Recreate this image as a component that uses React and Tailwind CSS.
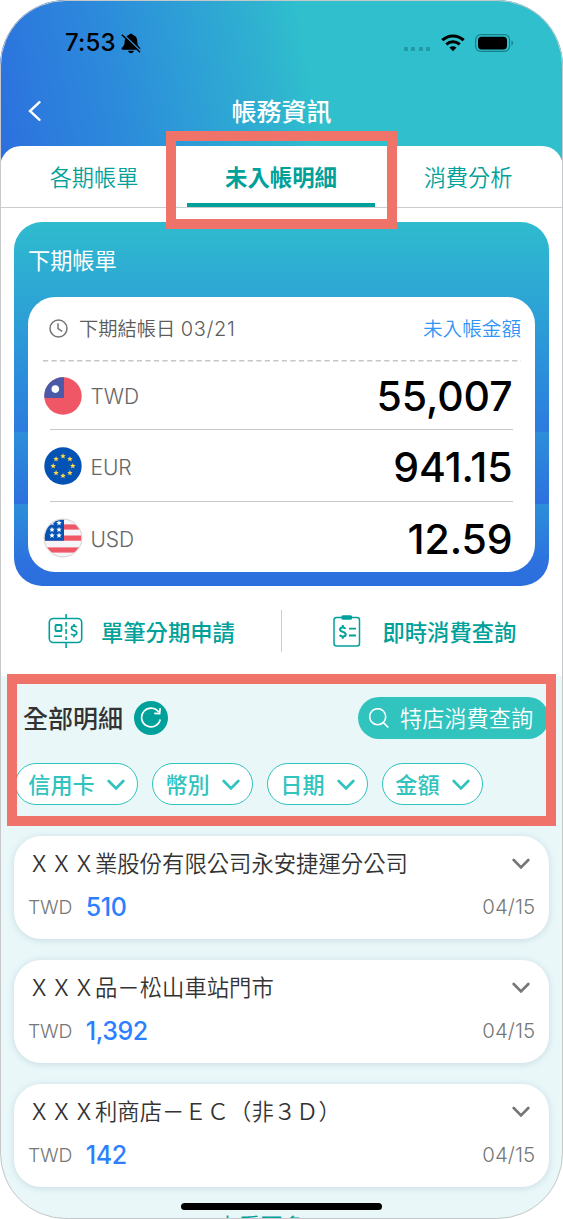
import React, { useState } from "react";

const TABS = ["各期帳單", "未入帳明細", "消費分析"];
const FILTERS = ["信用卡", "幣別", "日期", "金額"];

const RECORDS = [
  { name: "ＸＸＸ業股份有限公司永安捷運分公司", currency: "TWD", amount: "510", date: "04/15" },
  { name: "ＸＸＸ品－松山車站門市", currency: "TWD", amount: "1,392", date: "04/15" },
  { name: "ＸＸＸ利商店－ＥＣ（非３Ｄ）", currency: "TWD", amount: "142", date: "04/15" },
];

const STAR = "M0 -2.9 L.75 -.95 L2.8 -.9 L1.2 .4 L1.75 2.4 L0 1.25 L-1.75 2.4 L-1.2 .4 L-2.8 -.9 L-.75 -.95Z";

function FlagTW() {
  return (
    <svg className="size-[38px]" viewBox="0 0 38 38">
      <clipPath id="tw"><circle cx="19" cy="19" r="18.7" /></clipPath>
      <g clipPath="url(#tw)">
        <rect width="38" height="38" fill="#ef5766" />
        <rect width="20" height="21" fill="#4a5aa8" />
      </g>
      <circle cx="11.3" cy="12.1" r="3.8" fill="#fff" />
    </svg>
  );
}

function FlagEU() {
  const stars = [0, 45, 90, 135, 180, 225, 270, 315];
  return (
    <svg className="size-[38px]" viewBox="0 0 38 38">
      <circle cx="19" cy="19" r="18.7" fill="#0552b5" />
      {stars.map((deg) => (
        <path
          key={deg}
          d={STAR}
          fill="#ffda44"
          transform={`translate(${19 + 9.8 * Math.sin((deg * Math.PI) / 180)} ${19 - 9.8 * Math.cos((deg * Math.PI) / 180)})`}
        />
      ))}
    </svg>
  );
}

function FlagUS() {
  return (
    <svg className="-mx-px size-[40px]" viewBox="-1 -1 40 40">
      <clipPath id="us"><circle cx="19" cy="19" r="18.4" /></clipPath>
      <g clipPath="url(#us)">
        <rect width="38" height="38" fill="#f5f5f9" />
        <rect y="5.4" width="38" height="5.2" fill="#ef5766" />
        <rect y="16.5" width="38" height="5.2" fill="#ef5766" />
        <rect y="28.4" width="38" height="5.2" fill="#ef5766" />
        <rect width="20" height="21.7" fill="#0552b5" />
        <path d={STAR} fill="#fff" transform="translate(8 4)" />
        <path d={STAR} fill="#fff" transform="translate(15 4)" />
        <path d={STAR} fill="#fff" transform="translate(8 10.7)" />
        <path d={STAR} fill="#fff" transform="translate(15 10.7)" />
        <path d={STAR} fill="#fff" transform="translate(8 16.5)" />
        <path d={STAR} fill="#fff" transform="translate(15 16.5)" />
      </g>
      <circle cx="19" cy="19" r="18.9" fill="none" stroke="#cfcfcf" />
    </svg>
  );
}

function Chevron({ className }) {
  return (
    <svg className={className} viewBox="0 0 18 12" fill="none" stroke="currentColor" strokeWidth="2.7" strokeLinecap="round" strokeLinejoin="miter">
      <path d="M1.7 2 L9 9.4 L16.3 2" />
    </svg>
  );
}

function StatusBar() {
  return (
    <div className="flex h-[86px] items-center pl-[65px] pr-[49px]">
      <span className="text-[24px] leading-none font-medium tracking-[0.2px]">7:53</span>
      <svg className="ml-[5px] h-[21px] w-5" viewBox="0 0 20 21">
        <path d="M10 .8 C8.8 .8 8.4 1.3 8.2 1.8 C4.7 2.8 3.7 6 3.6 9 C3.5 12.5 2.2 13.2 .9 14.8 C.3 15.6 .6 16.8 1.8 16.8 H18.2 C19.4 16.8 19.7 15.6 19.1 14.8 C17.8 13.2 16.5 12.5 16.4 9 C16.3 6 15.3 2.8 11.8 1.8 C11.6 1.3 11.2 .8 10 .8Z M7 17.8 H13 C12.6 19.4 11.4 20.2 10 20.2 C8.6 20.2 7.4 19.4 7 17.8Z" />
        <path d="M2.2 1.2 L19.6 18" stroke="#2d8fda" strokeWidth="1.5" />
        <path d="M.9 1.8 L19 19.2" stroke="#000" strokeWidth="1.5" />
      </svg>
      <div className="mt-3 ml-auto flex gap-[3.4px]">
        <i className="size-1 rounded-[1px] bg-[#229aa5]" />
        <i className="size-1 rounded-[1px] bg-[#229aa5]" />
        <i className="size-1 rounded-[1px] bg-[#229aa5]" />
        <i className="size-1 rounded-[1px] bg-[#229aa5]" />
      </div>
      <svg className="ml-[11px] h-[18px] w-6" viewBox="0 0 24 18" fill="none" stroke="#000" strokeWidth="3">
        <path d="M1.3 6.2 C7.4 .5 16.6 .5 22.7 6.2" />
        <path d="M5.3 10.3 C9.2 6.8 14.8 6.8 18.7 10.3" />
        <path d="M8.5 13.6 C10.6 11.7 13.4 11.7 15.5 13.6 L12 17.2Z" fill="#000" stroke="none" />
      </svg>
      <svg className="ml-[10px] h-[18px] w-[39px]" viewBox="0 0 39 18">
        <rect x=".6" y=".6" width="34" height="16.8" rx="5.2" fill="none" stroke="#187f88" strokeWidth="1.2" />
        <rect x="3" y="2.8" width="29" height="12.6" rx="3.6" />
        <path d="M36.5 6.5 C38.5 7.2 38.5 10.8 36.5 11.5Z" fill="#187f88" />
      </svg>
    </div>
  );
}

function BalanceRow({ flag, code, amount }) {
  return (
    <div className="flex h-full items-center pl-[0.5px]">
      {flag}
      <div className="ml-[6px] flex h-full flex-1 items-center justify-between">
        <span className="ml-[3px] pt-[3px] text-[21px] font-light tracking-[-0.1px] text-[#666]">{code}</span>
        <span className="pt-[2px] text-[41px] leading-none font-medium tracking-[-0.1px] text-black">{amount}</span>
      </div>
    </div>
  );
}

function BillCard() {
  return (
    <section className="mx-[14px] mt-[14px]">
      <div className="flex h-[210px] flex-col rounded-t-[28px] bg-linear-to-b from-[#2fbbce] via-[#2da3d5] via-40% to-[#2d7bde] px-[14px]">
        <h2 className="h-[75px] pt-[23px] text-[22.2px] leading-8 text-white">下期帳單</h2>
        <div className="flex flex-1 flex-col rounded-t-[27px] bg-white">
          <div className="mx-[15px] flex h-[63px] items-center">
            <svg className="ml-[6px] size-[19px]" viewBox="0 0 19 19" fill="none" stroke="#757575" strokeWidth="1.5">
              <circle cx="9.5" cy="9.5" r="8.5" />
              <path d="M9 4.2 V9.5 L13.2 12.3" />
            </svg>
            <span className="ml-[11px] pt-px text-[19.3px] font-[350] text-[#5c5c5c]">
              下期結帳日 <span className="text-[20px] font-light tracking-[0.6px]">03/21</span>
            </span>
            <span className="-mr-[1px] ml-auto pt-[3px] text-[19.6px] font-[350] text-[#3295f8]">未入帳金額</span>
          </div>
          <svg className="ml-[14.5px] h-[2px] w-[478px]">
            <path d="M0 .8 H478" stroke="#c6c6c6" strokeWidth="1.5" strokeDasharray="5.2 3.33" />
          </svg>
          <div className="mr-[22.5px] ml-[15px] flex h-[70px] flex-col">
            <div className="h-[67px] pt-[1px]">
              <BalanceRow flag={<FlagTW />} code="TWD" amount="55,007" />
            </div>
            <div className="ml-[7px] h-[1.5px] bg-[#c6c6c6]" />
          </div>
        </div>
      </div>
      <div className="h-[72px] bg-linear-to-b from-[#2d8ed9] to-[#2d70df] px-[14px]">
        <div className="flex h-full flex-col bg-white pr-[22.5px] pl-[15px]">
          <div className="h-[69px]">
            <BalanceRow flag={<FlagEU />} code="EUR" amount="941.15" />
          </div>
          <div className="ml-[7px] h-[1.5px] bg-[#c6c6c6]" />
        </div>
      </div>
      <div className="h-[82.5px] rounded-b-[28px] bg-linear-to-b from-[#2d8ed9] via-[#2d70df] via-75% to-[#2b6fdd] px-[14px] pb-[14px]">
        <div className="h-full rounded-b-[27px] bg-white pr-[22.5px] pl-[15px]">
          <div className="h-[69px]">
            <BalanceRow flag={<FlagUS />} code="USD" amount="12.59" />
          </div>
        </div>
      </div>
    </section>
  );
}

function QuickActions() {
  return (
    <div className="flex h-[89.5px] items-center text-[22.3px] font-medium text-[#00a19a]">
      <div className="flex w-[280.5px] items-center pl-[48px]">
        <svg className="h-[34px] w-[35px]" viewBox="0 0 35 34" fill="none" stroke="currentColor" strokeWidth="1.6">
          <rect x="1.3" y="4.5" width="32.4" height="24" rx="4" />
          <path d="M18.1 0 V5 M18.1 8 V12.5 M18.1 15 V20 M18.1 22.5 V26 M18.1 29 V34" />
          <rect x="7.5" y="11" width="6" height="6" rx=".8" strokeWidth="1.8" />
          <path d="M6 22.2 H14" />
          <path d="M28.7 13.2 C27.8 11.5 23.5 11.6 23.5 14 C23.5 17.4 28.8 15.5 28.8 19 C28.8 21.4 24.3 21.8 23.2 19.8 M26 10 V12 M26 21 V23.3" strokeWidth="1.7" />
        </svg>
        <span className="ml-[18px] pt-[3px]">單筆分期申請</span>
      </div>
      <div className="h-[42px] w-[1.5px] bg-[#cccccc]" />
      <div className="flex flex-1 items-center pl-[51px]">
        <svg className="h-8 w-7" viewBox="0 0 28 32" fill="none" stroke="currentColor" strokeWidth="1.5">
          <rect x="1" y="2.5" width="25.5" height="28.5" rx="2.5" />
          <rect x="9" y="1" width="9.5" height="3" rx="1" fill="currentColor" />
          <path d="M12.4 13.8 C11.5 11.8 7.1 11.9 7.1 14.4 C7.1 17.7 12.7 16 12.7 19.4 C12.7 22 8 22.1 6.7 19.9 M9.8 10 V12 M9.8 21.5 V23.7" strokeWidth="2" />
          <path d="M16 13.7 H23 M16 20.5 H23" strokeWidth="1.8" />
        </svg>
        <span className="ml-[21.5px] pt-[3px]">即時消費查詢</span>
      </div>
    </div>
  );
}

function RecordCard({ record }) {
  return (
    <article className="h-[103px] rounded-[27px] bg-white px-[14px] pt-[12px] shadow-[0_1px_7px_rgba(60,110,120,0.2)]">
      <div className="flex h-8 items-center justify-between">
        <h3 className="text-[22.35px] leading-8 font-[350] whitespace-nowrap text-[#333]">{record.name}</h3>
        <Chevron className="mr-[5px] h-3 w-[18px] text-[#777]" />
      </div>
      <div className="mt-3 flex h-8 items-center">
        <span className="text-[19.3px] font-light tracking-[-0.2px] text-[#777]">{record.currency}</span>
        <span className="ml-[13.5px] text-[25px] leading-none font-medium tracking-[-0.4px] text-[#2c80ff]">{record.amount}</span>
        <span className="ml-auto text-[20.4px] font-light text-[#777]">{record.date}</span>
      </div>
    </article>
  );
}

export default function App() {
  const [active, setActive] = useState(1);

  return (
    <div className="relative h-[1219px] w-[563px] overflow-hidden bg-white font-['Inter','Noto_Sans_CJK_TC',sans-serif]">
      <div className="h-full overflow-hidden rounded-[66px] bg-white">
        <header className="h-[166px] bg-[linear-gradient(80deg,#2c6fdf_0%,#2c7cdd_9%,#2c8adb_21%,#2d9cd7_33%,#2fb2d0_48%,#2fbfcd_55%)]">
          <StatusBar />
          <div className="relative flex h-[50px] items-center justify-center">
            <svg className="absolute left-7 h-5 w-[13px]" viewBox="0 0 13 20" fill="none" stroke="#fff" strokeWidth="2.4" strokeLinecap="round">
              <path d="M11.5 1.2 L2 10 L11.5 18.8" />
            </svg>
            <h1 className="pt-[2px] text-[25px] leading-none font-medium text-white">帳務資訊</h1>
          </div>
        </header>

        <nav className="-mt-5 flex h-[61.5px] rounded-t-[21px] border-b-[1.5px] border-[#cccccc] bg-white px-[1px]">
          {TABS.map((tab, i) => (
            <button
              key={tab}
              onClick={() => setActive(i)}
              className={
                i === active
                  ? "h-[61px] w-[188px] border-b-4 border-[#00a19a] pt-[6px] text-[22.4px] font-bold text-[#00a19a]"
                  : "h-[61px] w-[186px] pt-[3px] text-[22.2px] font-[350] text-[#00a19a]"
              }
            >
              {tab}
            </button>
          ))}
        </nav>

        <BillCard />
        <QuickActions />

        <main className="h-[560px] bg-[#e9f7f9] px-[14px] pt-[21px]">
          <div className="flex h-[42px] items-center pl-[9px]">
            <h2 className="pt-[3px] text-[25px] leading-none font-medium text-[#333]">全部明細</h2>
            <button className="ml-[11px] flex size-[34px] items-center justify-center rounded-full bg-[#00a19a]">
              <svg className="size-[22px]" viewBox="0 0 22 22" fill="none" stroke="#fff" strokeWidth="1.7">
                <path d="M18.8 5.2 A9.4 9.4 0 1 0 20.2 12.5" />
                <path d="M20.2 1.2 L19.6 6.7 L14.2 6.3" />
              </svg>
            </button>
            <button className="ml-auto flex h-[42px] w-[191px] items-center rounded-full bg-[#31c3be] pl-[11px] text-[22.2px] font-[350] whitespace-nowrap text-white">
              <svg className="size-5 shrink-0" viewBox="0 0 20 20" fill="none" stroke="#fff" strokeWidth="1.6">
                <circle cx="8.7" cy="8.7" r="8" />
                <path d="M14.3 14.5 L19.3 19.5" />
              </svg>
              <span className="ml-[11px] pt-[2px]">特店消費查詢</span>
            </button>
          </div>

          <div className="mt-6 flex gap-[14.2px] pl-[1px]">
            {FILTERS.map((label) => (
              <button
                key={label}
                className="flex h-[42px] items-center rounded-[21px] border-[1.5px] border-[#31c3be] bg-white px-[12.3px] text-[22.1px] leading-none font-medium whitespace-nowrap text-[#31c3be]"
              >
                <span className="pt-[3px]">{label}</span>
                <Chevron className="ml-[12px] mt-[2px] h-3 w-[18px]" />
              </button>
            ))}
          </div>

          <div className="mt-[31px] flex flex-col gap-[21px]">
            {RECORDS.map((r) => (
              <RecordCard key={r.name} record={r} />
            ))}
          </div>
          <p className="mt-[23px] pr-[42px] text-center text-[22px] leading-8 text-[#00a19a]">查看更多</p>
        </main>
      </div>

      {/* highlight frames */}
      <div className="pointer-events-none absolute top-[131px] left-[166px] h-[98px] w-[231px] border-10 border-[#f07369]" />
      <div className="pointer-events-none absolute top-[674px] left-[7px] h-[152px] w-[549px] border-10 border-[#f07369]" />

      <div className="absolute top-[1203px] left-[181px] h-[7px] w-[201px] rounded-full bg-black" />
      <div className="pointer-events-none absolute inset-0 rounded-[66px] border-[1.5px] border-[#c6c8c9]" />
    </div>
  );
}
